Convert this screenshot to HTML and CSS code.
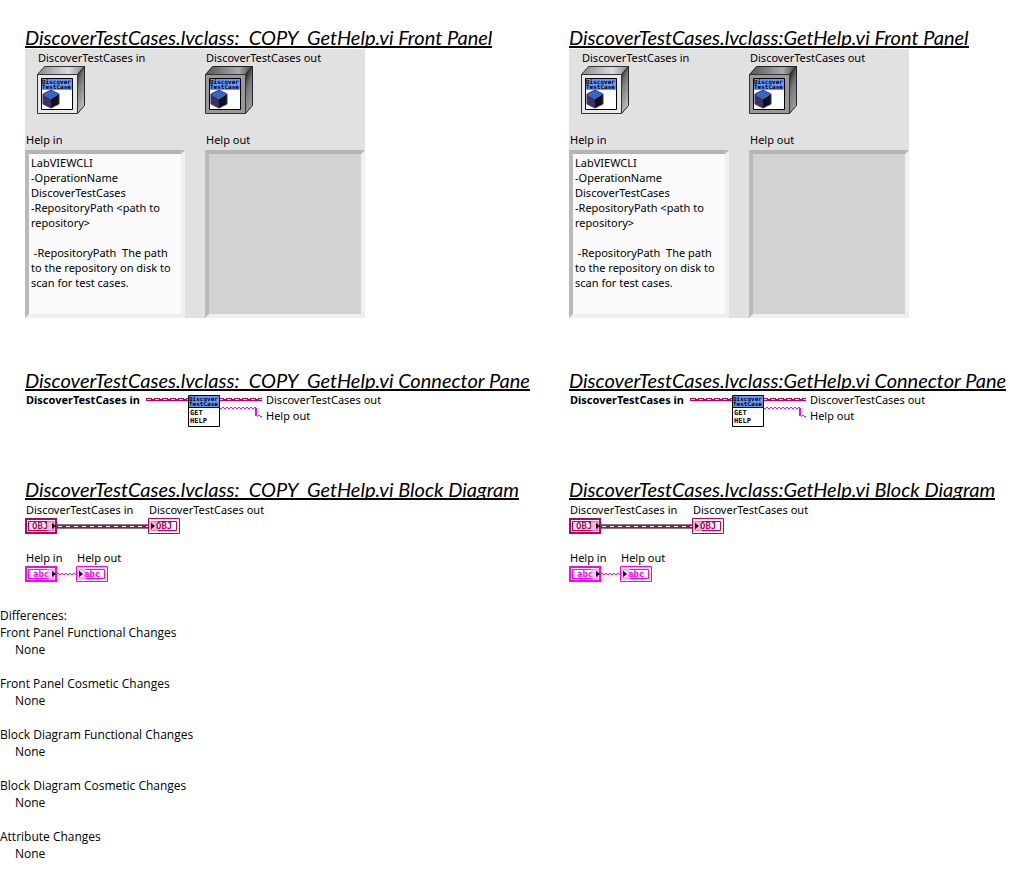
FILE: index.html
```html
<!DOCTYPE html>
<html lang="en">
<head>
<meta charset="utf-8">
<title>VI Comparison Report</title>
<link rel="stylesheet" href="styles.css">
</head>
<body>
<svg class="defs" aria-hidden="true">
  <defs>
    <linearGradient id="topLight" x1="0" x2="1"><stop offset="0" stop-color="#888"/><stop offset=".65" stop-color="#ddd"/><stop offset="1" stop-color="#888"/></linearGradient>
    <linearGradient id="sideLight" x1="0" y1="0" x2=".4" y2="1"><stop offset="0" stop-color="#111"/><stop offset=".4" stop-color="#777"/><stop offset="1" stop-color="#bbb"/></linearGradient>
    <linearGradient id="topDark" x1="0" x2="1"><stop offset="0" stop-color="#555"/><stop offset=".7" stop-color="#aaa"/><stop offset="1" stop-color="#444"/></linearGradient>
    <linearGradient id="sideDark" x1="0" y1="0" x2=".4" y2="1"><stop offset="0" stop-color="#000"/><stop offset=".5" stop-color="#777"/><stop offset="1" stop-color="#999"/></linearGradient>
    <pattern id="classWire" width="8" height="3" patternUnits="userSpaceOnUse" y="3">
      <path fill="#c0005f" d="M0 0h8v3H0z"/><path fill="#fff" d="M1 1h4v1H1zM6 0h2v1H6z"/>
    </pattern>
    <pattern id="objWire" y="6" width="8" height="5" patternUnits="userSpaceOnUse">
      <path fill="#808080" d="M0 0h8v5H0z"/><path fill="#c0005f" d="M0 1h8v3H0z"/><path fill="#fff" d="M1 2h4v1H1z"/>
    </pattern>
    <pattern id="textWire" width="4" height="2" patternUnits="userSpaceOnUse">
      <path fill="#f0f" d="M0 0h2v1H0zM2 1h2v1H2z"/>
    </pattern>
    <pattern id="textWireOdd" y="1" width="4" height="2" patternUnits="userSpaceOnUse">
      <path fill="#f0f" d="M0 0h2v1H0zM2 1h2v1H2z"/>
    </pattern>
    <symbol id="banner" viewBox="0 0 32 12">
      <path fill="#69f" d="M0 0h32v12H0z"/>
      <text class="pixel" x="1" y="6">Discover</text>
      <text class="pixel" x="1" y="11">TestCase</text>
    </symbol>
    <symbol id="screen" viewBox="0 0 48 48">
      <path fill="#fff" d="M4.500 12.500h31v31h-31z"/>
      <use href="#banner" x="4" y="12" width="32" height="12"/>
      <path fill="none" stroke="#000" d="M4.500 12.500h31v31h-31z"/>
      <path fill="#36c" d="M14 24l8 4-8 5-8-5z"/>
      <path fill="#336" d="M6 28l8 5v9l-8-4z"/>
      <path fill="#111" d="M22 28l-8 5v9l8-4z"/>
      <path fill="none" stroke="#339" d="M14 24l8 4v10l-8 4-8-4V28z"/>
    </symbol>
    <symbol id="objectIn" viewBox="0 0 48 48">
      <path fill="url(#topLight)" stroke="#333" d="M.5 8.500l7-8h40l-7 8z"/>
      <path fill="url(#sideLight)" stroke="#222" d="M40.500 8.500l7-8v39l-7 8z"/>
      <path fill="#e8e8e8" stroke="#333" d="M.5 8.500h40v39H.5z"/>
      <use href="#screen" width="48" height="48"/>
    </symbol>
    <symbol id="objectOut" viewBox="0 0 48 48">
      <path fill="url(#topDark)" stroke="#222" d="M.5 8.500l7-8h40l-7 8z"/>
      <path fill="url(#sideDark)" stroke="#222" d="M40.500 8.500l7-8v39l-7 8z"/>
      <path fill="#999" stroke="#333" d="M.5 8.500h40v39H.5z"/>
      <use href="#screen" width="48" height="48"/>
    </symbol>
    <symbol id="connector" viewBox="0 0 116 32">
      <path fill="url(#classWire)" d="M0 3h42v3H0zM74 3h42v3H74z"/>
      <path fill="url(#textWire)" d="M74 12h36v2H74zM111 20h5v2h-5z"/>
      <path stroke="#f0f" stroke-width="2" d="M110 13v8"/>
      <path fill="#fff" d="M42 0h32v32H42z"/>
      <use href="#banner" x="42" y="0" width="32" height="12"/>
      <path fill="none" stroke="#000" d="M42.500.5h31v31h-31zM42 12.500h32"/>
      <text class="glyphs" x="44" y="20">GET</text>
      <text class="glyphs" x="44" y="28">HELP</text>
    </symbol>
    <symbol id="objDiagram" viewBox="0 0 155 16">
      <path fill="url(#objWire)" d="M32 6h91v5H32z"/>
      <path fill="#fff" stroke="#c0005f" stroke-width="2" d="M1 1h30v14H1z"/>
      <path fill="none" stroke="#c0005f" d="M3.500 3.500h25v9h-25z"/>
      <text class="type obj" x="7" y="11">OBJ</text>
      <path fill="#e7a0c8" opacity=".7" d="M22 3h8v10h-8z"/>
      <path d="M27 5l4 3-4 3z"/>
      <path fill="#fff" stroke="#c0005f" d="M123.500.5h31v15h-31zM126.500 3.500h25v9h-25z"/>
      <path fill="#e7a0c8" opacity=".8" d="M124 3h9v10h-9z"/>
      <text class="type obj" x="131" y="11">OBJ</text>
      <path d="M126 5l4 3-4 3z"/>
    </symbol>
    <symbol id="textDiagram" viewBox="0 0 83 16">
      <path fill="url(#textWireOdd)" d="M32 7h19v2H32z"/>
      <path fill="#fff" stroke="#f0f" stroke-width="2" d="M1 1h30v14H1z"/>
      <path fill="none" stroke="#f0f" d="M3.500 3.500h25v9h-25z"/>
      <text class="type abc" x="8" y="11">abc</text>
      <path fill="#fab4fa" opacity=".7" d="M22 3h8v10h-8z"/>
      <path d="M27 5l4 3-4 3z"/>
      <path fill="#fff" stroke="#f0f" d="M51.500.5h31v15h-31zM54.500 3.500h25v9h-25z"/>
      <path fill="#fab4fa" opacity=".8" d="M52 3h9v10h-9z"/>
      <text class="type abc" x="59" y="11">abc</text>
      <path d="M54 5l4 3-4 3z"/>
    </symbol>
  </defs>
</svg>
<main>
  <div class="compare">
    <article class="vi">
      <section class="front">
        <h2>DiscoverTestCases.lvclass:  COPY  GetHelp.vi Front Panel</h2>
        <div class="panel">
          <div class="object"><span>DiscoverTestCases in</span><svg class="cube"><use href="#objectIn"/></svg></div>
          <div class="object"><span>DiscoverTestCases out</span><svg class="cube"><use href="#objectOut"/></svg></div>
          <div class="field"><label for="in1">Help in</label><textarea id="in1">LabVIEWCLI
-OperationName
DiscoverTestCases
-RepositoryPath &lt;path to
repository&gt;

 -RepositoryPath  The path
to the repository on disk to
scan for test cases.</textarea></div>
          <div class="field"><label for="out1">Help out</label><textarea id="out1" class="output" readonly></textarea></div>
        </div>
      </section>
      <section class="pane">
        <h2>DiscoverTestCases.lvclass:  COPY  GetHelp.vi Connector Pane</h2>
        <div class="connector"><b>DiscoverTestCases in</b><svg class="wires"><use href="#connector"/></svg><div class="outputs"><span>DiscoverTestCases out</span><span>Help out</span></div></div>
      </section>
      <section class="diagram">
        <h2>DiscoverTestCases.lvclass:  COPY  GetHelp.vi Block Diagram</h2>
        <div class="node object-node"><span>DiscoverTestCases in</span><span>DiscoverTestCases out</span><svg><use href="#objDiagram"/></svg></div>
        <div class="node text-node"><span>Help in</span><span>Help out</span><svg><use href="#textDiagram"/></svg></div>
      </section>
    </article>
    <article class="vi">
      <section class="front">
        <h2>DiscoverTestCases.lvclass:GetHelp.vi Front Panel</h2>
        <div class="panel">
          <div class="object"><span>DiscoverTestCases in</span><svg class="cube"><use href="#objectIn"/></svg></div>
          <div class="object"><span>DiscoverTestCases out</span><svg class="cube"><use href="#objectOut"/></svg></div>
          <div class="field"><label for="in2">Help in</label><textarea id="in2">LabVIEWCLI
-OperationName
DiscoverTestCases
-RepositoryPath &lt;path to
repository&gt;

 -RepositoryPath  The path
to the repository on disk to
scan for test cases.</textarea></div>
          <div class="field"><label for="out2">Help out</label><textarea id="out2" class="output" readonly></textarea></div>
        </div>
      </section>
      <section class="pane">
        <h2>DiscoverTestCases.lvclass:GetHelp.vi Connector Pane</h2>
        <div class="connector"><b>DiscoverTestCases in</b><svg class="wires"><use href="#connector"/></svg><div class="outputs"><span>DiscoverTestCases out</span><span>Help out</span></div></div>
      </section>
      <section class="diagram">
        <h2>DiscoverTestCases.lvclass:GetHelp.vi Block Diagram</h2>
        <div class="node object-node"><span>DiscoverTestCases in</span><span>DiscoverTestCases out</span><svg><use href="#objDiagram"/></svg></div>
        <div class="node text-node"><span>Help in</span><span>Help out</span><svg><use href="#textDiagram"/></svg></div>
      </section>
    </article>
  </div>
  <section class="differences">
    <p>Differences:</p>
    <dl>
      <dt>Front Panel Functional Changes</dt><dd>None</dd>
      <dt>Front Panel Cosmetic Changes</dt><dd>None</dd>
      <dt>Block Diagram Functional Changes</dt><dd>None</dd>
      <dt>Block Diagram Cosmetic Changes</dt><dd>None</dd>
      <dt>Attribute Changes</dt><dd>None</dd>
    </dl>
  </section>
</main>
</body>
</html>
```

FILE: styles.css
```css
* { box-sizing: border-box; }
body {
  margin: 0;
  background: #fff;
  color: #000;
  font: 11px/16px "Noto Sans", sans-serif;
}
svg { display: block; }
.defs { position: absolute; width: 0; height: 0; }
.compare {
  display: grid;
  grid-template-columns: minmax(0, 544fr) minmax(0, 456fr);
  padding: 28px 0 0 25px;
}
h2 {
  width: fit-content;
  height: 20px;
  margin: 0 0 1px;
  overflow: hidden;
  border-bottom: 2px solid #000;
  font: italic 20px/18px Lato, sans-serif;
  white-space: pre;
}
.front { margin-bottom: 53px; }
.pane { margin-bottom: 53px; }
.panel {
  display: grid;
  grid-template-columns: 160px 160px;
  gap: 18px 20px;
  width: fit-content;
  background: #e1e1e1;
}
.object { padding-top: 1px; }
.object span { display: block; padding-left: 1px; }
.object:first-child { padding-left: 12px; }
.cube { width: 48px; height: 48px; }
.field label { display: block; height: 18px; padding-left: 1px; }
textarea {
  display: block;
  width: 100%;
  height: 168px;
  padding: 1px 2px;
  overflow: hidden;
  resize: none;
  border: 4px solid;
  border-color: #b4b4b4 #f0f0f0 #f0f0f0 #b9b9b9;
  background: #fafafa;
  color: #000;
  font: 11px/15px "Noto Sans", sans-serif;
  white-space: pre;
}
textarea.output { background: #d2d2d2; }
.connector {
  display: flex;
  align-items: flex-start;
  padding: 3px 0 0 1px;
}
.connector b { width: 120px; line-height: 10px; white-space: nowrap; }
.wires { width: 116px; height: 32px; }
.outputs { display: flex; flex-direction: column; gap: 6px; margin-left: 4px; line-height: 10px; }
.node { display: grid; width: fit-content; white-space: nowrap; }
.node span { padding-left: 1px; }
.node svg { grid-column: 1 / -1; height: 16px; }
.object-node { grid-template-columns: 123px auto; padding-top: 1px; margin-bottom: 16px; }
.object-node svg { width: 155px; }
.text-node { grid-template-columns: 51px auto; }
.text-node svg { width: 83px; }
.pixel { font: bold 6px "DejaVu Sans Mono", monospace; }
.glyphs { font: bold 7px "DejaVu Sans Mono", monospace; }
.type { font: bold 9px "DejaVu Sans Mono", monospace; }
.obj { fill: #c0005f; }
.abc { fill: #f0f; }
.differences { padding: 25px 0; font: 12px/17px "Open Sans", sans-serif; }
.differences p, .differences dl { margin: 0; }
.differences dd { margin: 0 0 17px 15px; }
```
